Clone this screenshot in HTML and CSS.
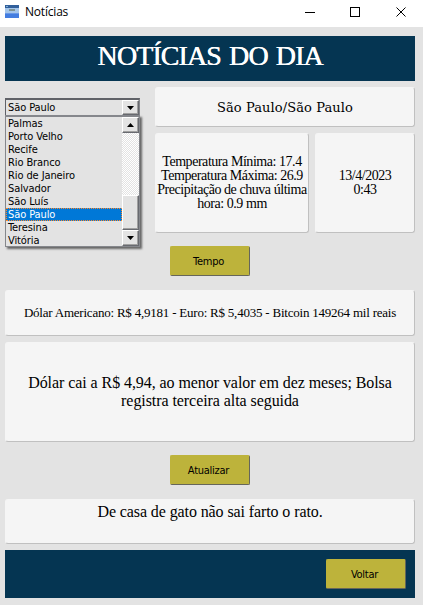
FILE: index.html
```html
<!DOCTYPE html>
<html lang="pt-BR">
<head>
<meta charset="utf-8">
<title>Notícias</title>
<link rel="stylesheet" href="styles.css">
</head>
<body>
<header class="titlebar">
  <svg class="app-icon" width="14" height="13" viewBox="0 0 14 13" shape-rendering="crispEdges"><rect width="14" height="13" fill="#437de0"/><rect width="14" height="3" fill="#315f9b"/><rect y="3" width="14" height="5" fill="#a5c6eb"/><rect x="4" y="4" width="6" height="2" fill="#7d9295"/><rect y="8" width="14" height="1" fill="#6797e7"/><rect x="1" y="1" width="2" height="1" fill="#7fafd4"/></svg>
  <span class="window-title">Notícias</span>
  <svg class="controls" width="103" height="12" viewBox="0 0 103 12" fill="none" stroke="#000"><path d="M0 6.5h10M45.5 1.5h9v9h-9z" shape-rendering="crispEdges"/><path d="M91.5 1.5l9 9m0-9l-9 9"/></svg>
</header>
<main>
  <h1><span class="headline">NOTÍCIAS DO DIA</span></h1>
  <section class="weather">
    <div class="picker">
      <div class="combo"><span>São Paulo</span><i class="btn3d"><svg width="7" height="4"><path d="M0 0h7L3.5 4z"/></svg></i></div>
      <div class="popup">
        <ul>
          <li>Palmas</li><li>Porto Velho</li><li>Recife</li><li>Rio Branco</li><li>Rio de Janeiro</li><li>Salvador</li><li>São Luís</li><li class="selected">São Paulo</li><li>Teresina</li><li>Vitória</li>
        </ul>
        <div class="scrollbar"><i class="btn3d"><svg width="7" height="4"><path d="M0 4h7L3.5 0z"/></svg></i><b></b><i class="btn3d thumb"></i><i class="btn3d"><svg width="7" height="4"><path d="M0 0h7L3.5 4z"/></svg></i></div>
      </div>
    </div>
    <div class="card place"><p>São Paulo/São Paulo</p></div>
    <div class="card temps"><p>Temperatura Mínima: 17.4</p><p>Temperatura Máxima: 26.9</p><p>Precipitação de chuva última</p><p>hora: 0.9 mm</p></div>
    <div class="card date"><p>13/4/2023</p><p>0:43</p></div>
  </section>
  <button class="weather-btn">Tempo</button>
  <div class="card rates"><p>Dólar Americano: R$ 4,9181 - Euro: R$ 5,4035 - Bitcoin 149264 mil reais</p></div>
  <div class="card news"><p>Dólar cai a R$ 4,94, ao menor valor em dez meses; Bolsa</p><p>registra terceira alta seguida</p></div>
  <button class="refresh-btn">Atualizar</button>
  <div class="card proverb"><p>De casa de gato não sai farto o rato.</p></div>
  <footer><button>Voltar</button></footer>
</main>
</body>
</html>
```
FILE: styles.css
```css
* { box-sizing: border-box; }
body { margin: 0; width: 423px; height: 605px; overflow: hidden; background: #e3e3e3; color: #000; font-family: "Liberation Serif", serif; }
p, h1, ul { margin: 0; padding: 0; }
.titlebar { height: 27px; background: #fff; display: flex; align-items: center; padding: 0 15px 4px 5px; }
.window-title { font: 12px/16px "Open Sans", sans-serif; margin-left: 6px; letter-spacing: -.2px; }
.controls { margin-left: auto; }
main { width: 410px; margin: 9px 0 0 5px; display: flex; flex-direction: column; }
h1 { height: 45px; background: #053552; color: #fff; text-align: center; font-size: 28px; line-height: 40px; font-weight: 400; white-space: nowrap; }
.headline { letter-spacing: -.9px; word-spacing: 2px; text-shadow: .5px 0 #fff; }
.weather { margin-top: 6px; display: grid; grid-template-columns: 144px 154px 100px; grid-template-rows: 40px 100px; column-gap: 6px; row-gap: 6px; }
.picker { grid-row: 1 / 3; position: relative; padding-top: 11px; font: 11px/13px "DejaVu Sans Condensed", sans-serif; letter-spacing: -.1px; }
.combo { width: 135px; height: 18px; border: 1px solid #85878c; border-top: 2px solid #606268; border-left-color: #606268; display: flex; justify-content: space-between; background: #e3e3e3; }
.combo span { padding: 1px 0 0 2px; }
.combo .btn3d { height: 15px; }
.btn3d { width: 17px; height: 16px; flex: none; display: flex; align-items: center; justify-content: center; background: #e3e3e3; border: 1px solid; border-color: #fff #686a70 #686a70 #fff; box-shadow: inset -1px -1px #a0a0a0; }
.popup { position: absolute; left: 0; top: 28px; width: 135px; height: 132px; border: 1px solid #85878c; border-top-width: 2px; background: #e3e3e3; display: flex; box-shadow: 2px 2px 2px #666; }
ul { list-style: none; width: 116px; }
li { height: 13px; padding-left: 2px; white-space: nowrap; }
.selected { background: #0078d7; color: #fff; outline: 1px dotted #ff8728; outline-offset: -1px; }
.scrollbar { width: 17px; display: flex; flex-direction: column; }
.scrollbar b { height: 62px; background: repeating-conic-gradient(#fff 0 25%, #e3e3e3 0 50%) 0 0 / 2px 2px; }
.scrollbar .thumb { height: 35px; }
.card { background: #f5f5f5; border-radius: 3px; border: 1px solid; border-color: #f5f5f5 #c0c0c0 #c0c0c0 #f5f5f5; text-align: center; white-space: nowrap; display: flex; flex-direction: column; align-items: center; justify-content: center; }
.place { grid-column: 2 / 4; font: 13px/18px "DejaVu Serif", serif; letter-spacing: .1px; }
.place p { padding-top: 2px; }
.temps, .date { font-size: 14px; line-height: 14px; }
.temps { letter-spacing: -.45px; }
.date { letter-spacing: -.5px; }
.rates { height: 46px; margin-top: 14px; font-size: 13px; line-height: 16px; letter-spacing: -.22px; }
.news { height: 100px; margin-top: 6px; font-size: 16px; line-height: 18px; letter-spacing: -.07px; }
.proverb { height: 45px; margin-top: 14px; font-size: 16px; line-height: 20px; letter-spacing: -.1px; justify-content: flex-start; padding-top: 2px; }
button { width: 80px; height: 30px; padding: 2px 3px 0 0; background: #bdb33b; border: 1px solid; border-color: #bdb33b #66665a #66665a #bdb33b; border-radius: 2px; color: #000; font: 11px/14px "DejaVu Sans Condensed", sans-serif; letter-spacing: -.25px; }
.weather-btn, .refresh-btn { margin: 13px 0 0 165px; }
footer { height: 48px; margin-top: 6px; padding: 9px 9px 0 0; background: #053552; }
footer button { display: block; margin-left: auto; }
```
